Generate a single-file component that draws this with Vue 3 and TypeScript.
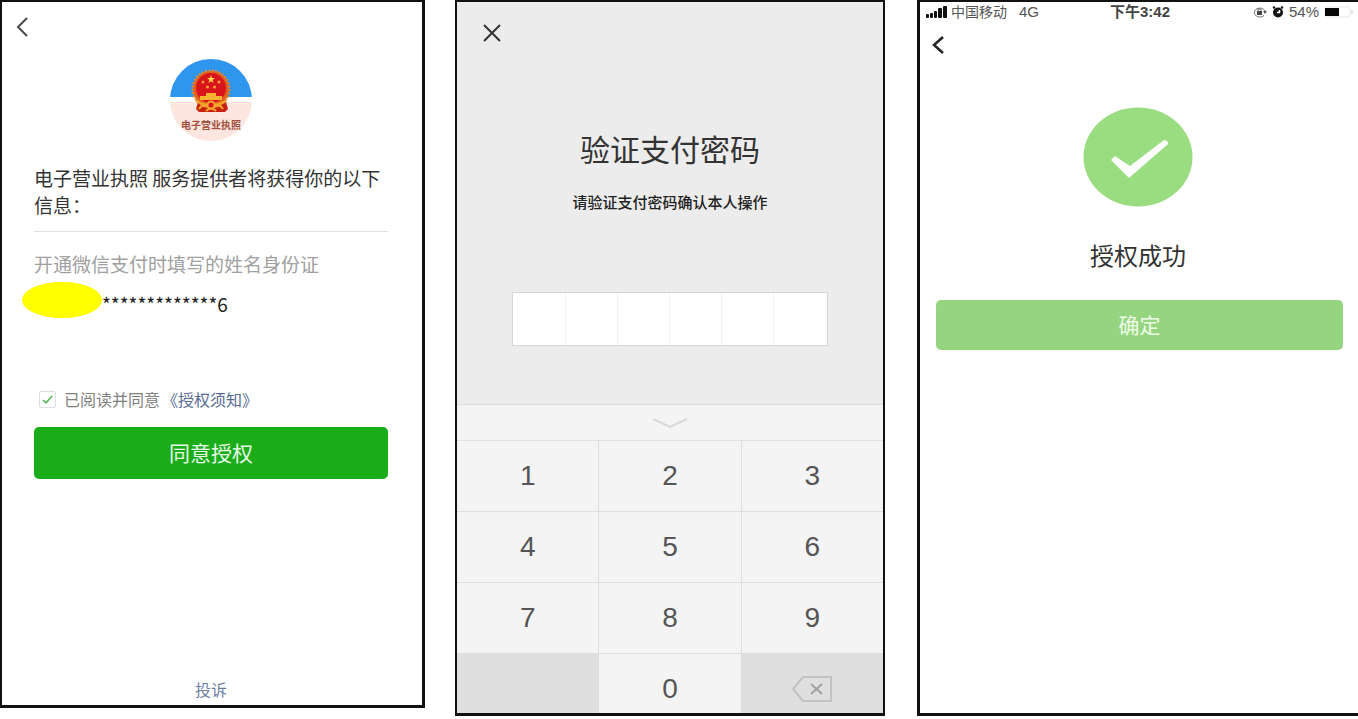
<script setup lang="ts">
import { ref } from 'vue'

const agreed = ref(true)
const pin = ref<string[]>(['', '', '', '', '', ''])
const digits = ['1', '2', '3', '4', '5', '6', '7', '8', '9']

function press(digit: string): void {
  const slot = pin.value.indexOf('')
  if (slot >= 0) pin.value[slot] = digit
}

function erase(): void {
  for (let i = pin.value.length - 1; i >= 0; i--) {
    if (pin.value[i] !== '') {
      pin.value[i] = ''
      return
    }
  }
}
</script>

<template>
  <main class="screens">
    <section class="phone consent">
      <button class="icon-button consent-back" aria-label="返回">
        <svg width="12" height="20" viewBox="0 0 12 20"><path d="M11 1 2 10l9 9" fill="none" stroke="#4a4a4a" stroke-width="2" /></svg>
      </button>
      <div class="logo">
        <svg class="logo-art" width="82" height="82" viewBox="0 0 82 82" aria-hidden="true">
          <defs><clipPath id="disc"><circle cx="41" cy="41" r="41" /></clipPath></defs>
          <g clip-path="url(#disc)">
            <rect width="82" height="82" fill="#fde6df" />
            <rect width="82" height="38" fill="#2f96ef" />
            <rect y="38" width="82" height="5" fill="#fff" />
          </g>
          <path d="M28 43 26 50l3 3h26l3-3-2-7z" fill="#c8200f" />
          <circle cx="41" cy="30" r="18" fill="#e2601c" />
          <circle cx="41" cy="30" r="18.5" fill="none" stroke="#e98a2a" stroke-width="2" stroke-dasharray="2 1.5" />
          <circle cx="41" cy="29" r="15" fill="#d9151b" />
          <path d="m41 16 1 3h3l-2.400 2 1 3-2.600-1.800-2.600 1.800 1-3-2.400-2h3z" fill="#ffd54a" />
          <g fill="#f9a23a"><circle cx="33" cy="23" r="1.500" /><circle cx="49" cy="23" r="1.500" /><circle cx="37.500" cy="28" r="1.500" /><circle cx="44.500" cy="28" r="1.500" /></g>
          <path d="M36 34h10v3h6v4H30v-4h6z" fill="#f6b431" />
          <path d="M26 42q15 8 30 0M29 50q4-6 8-2M53 50q-4-6-8-2M36 52q5-5 10 0" fill="none" stroke="#f3a62c" stroke-width="2" />
          <circle cx="41" cy="46" r="3.500" fill="#d9151b" stroke="#f3a62c" stroke-width="2" />
        </svg>
        <span class="logo-name">电子营业执照</span>
      </div>
      <h1 class="request">电子营业执照 服务提供者将获得你的以下信息：</h1>
      <p class="scope">开通微信支付时填写的姓名身份证</p>
      <p class="identity"><span class="mask"></span><span class="number">*************6</span></p>
      <div class="agreement">
        <input id="agree" v-model="agreed" type="checkbox" />
        <label for="agree">已阅读并同意</label><a href="#terms">《授权须知》</a>
      </div>
      <button class="primary">同意授权</button>
      <a class="complain" href="#complain">投诉</a>
    </section>

    <section class="phone verify">
      <button class="icon-button close" aria-label="关闭">
        <svg width="18" height="18" viewBox="0 0 18 18"><path d="m1 1 16 16M17 1 1 17" fill="none" stroke="#333" stroke-width="2" /></svg>
      </button>
      <h2 class="verify-title">验证支付密码</h2>
      <p class="verify-note">请验证支付密码确认本人操作</p>
      <div class="pin">
        <input v-for="(_, i) in pin" :key="i" v-model="pin[i]" type="password" maxlength="1" :aria-label="`密码第${i + 1}位`" />
      </div>
      <div class="keyboard">
        <button class="collapse" aria-label="收起键盘">
          <svg width="36" height="11" viewBox="0 0 36 11"><path d="m1 1 17 8 17-8" fill="none" stroke="#d9d9d9" stroke-width="2" /></svg>
        </button>
        <div class="keys">
          <button v-for="d in digits" :key="d" class="key" @click="press(d)">{{ d }}</button>
          <span class="key blank"></span>
          <button class="key" @click="press('0')">0</button>
          <button class="key blank" aria-label="删除" @click="erase">
            <svg width="42" height="28" viewBox="0 0 42 28"><path d="M12 2h28v24H12L2 14z" fill="none" stroke="#c2c2c2" stroke-width="2" /><path d="m20 9 11 10M31 9 20 19" fill="none" stroke="#a2a2a2" stroke-width="2" /></svg>
          </button>
        </div>
      </div>
    </section>

    <section class="phone success">
      <header class="status">
        <div class="carrier">
          <svg width="21" height="12" viewBox="0 0 21 12" aria-hidden="true" fill="#111"><rect y="8" width="3" height="4" rx="1" /><rect x="4" y="7" width="3" height="5" rx="1" /><rect x="8" y="5" width="3" height="7" rx="1" /><rect x="12" y="2" width="4" height="10" rx="1" /><rect x="17" width="4" height="12" rx="1" /></svg>
          <span>中国移动</span><span class="network">4G</span>
        </div>
        <span class="clock">下午3:42</span>
        <div class="power">
          <svg width="14" height="12" viewBox="0 0 14 12" aria-hidden="true"><path d="M11 9.500A5.500 4.500 0 1 1 12 5" fill="none" stroke="#777" /><path d="m10 5 4 0-2 3z" fill="#555" /><rect x="4" y="5" width="5" height="4" fill="#444" /><path d="M5 5V3h3v2" fill="none" stroke="#666" /></svg>
          <svg width="12" height="12" viewBox="0 0 12 12" aria-hidden="true"><circle cx="6" cy="6.500" r="5" fill="#111" /><path d="m1 2 2-1M11 2 9 1" stroke="#111" stroke-width="2" /><path d="M6 4.500v2.500h2.500" fill="none" stroke="#fff" stroke-width="1.500" transform="rotate(-90 6.500 6)" /></svg>
          <span>54%</span>
          <svg width="30" height="12" viewBox="0 0 30 12" aria-hidden="true"><rect x="1" y="1" width="25" height="10" rx="2" fill="#fff" stroke="#e8e8e8" /><rect x="1" y="2" width="14" height="8" fill="#080808" /><path d="M28 4v4" stroke="#e2e2e2" stroke-width="2" /></svg>
        </div>
      </header>
      <button class="icon-button success-back" aria-label="返回">
        <svg width="12" height="18" viewBox="0 0 12 18"><path d="M11 1 2 9l9 8" fill="none" stroke="#222" stroke-width="2.500" /></svg>
      </button>
      <svg class="tick" width="110" height="100" viewBox="0 0 110 100" aria-hidden="true"><ellipse cx="55" cy="50" rx="54.500" ry="49.500" fill="#9adc80" /><path d="m28 53 4-4 15 10 34-26q4 0 4 4L46 71z" fill="#fff" /></svg>
      <h2 class="success-title">授权成功</h2>
      <button class="confirm">确定</button>
    </section>
  </main>
</template>

<style>
body {
  margin: 0;
  background: #fff;
}
</style>

<style scoped>
.screens {
  display: grid;
  grid-template-columns: 425fr 430fr 443fr;
  column-gap: 30px;
  box-sizing: border-box;
  min-height: 100vh;
  padding-bottom: 3px;
  font-family: "Noto Sans CJK SC", sans-serif;
}
h1, h2, p {
  margin: 0;
  font-weight: 400;
}
button {
  margin: 0;
  padding: 0;
  border: 0;
  font: inherit;
  cursor: pointer;
}
a {
  color: #576b95;
  text-decoration: none;
}
svg {
  display: block;
  flex: none;
}
.phone {
  display: flex;
  flex-direction: column;
  box-sizing: border-box;
  min-width: 0;
  border: 2px solid #111;
}
.icon-button {
  align-self: flex-start;
  background: none;
}

.consent {
  margin-bottom: 8px;
  padding: 0 34px 4px 32px;
  border-width: 2px 3px 3px 2px;
}
.consent-back {
  margin: 15px 0 0 -18px;
}
.logo {
  position: relative;
  align-self: center;
  margin-top: 22px;
}
.logo-name {
  position: absolute;
  right: 0;
  bottom: 9px;
  left: 0;
  color: #a2523f;
  font-size: 10px;
  font-weight: 700;
  line-height: 14px;
  text-align: center;
}
.request {
  padding: 23px 0 13px;
  border-bottom: 1px solid #e0e0e0;
  color: #333;
  font-size: 19px;
  line-height: 27px;
}
.scope {
  margin-top: 18px;
  color: #a0a0a0;
  font-size: 19px;
  line-height: 28px;
}
.identity {
  display: flex;
  margin: 4px 0 0 -12px;
  color: #222;
  font-size: 19px;
  line-height: 28px;
}
.number {
  padding-top: 8px;
}
.mask {
  width: 80px;
  height: 36px;
  border-radius: 50%;
  background: #ff0;
}
.agreement {
  display: flex;
  align-items: center;
  margin-top: 69px;
  color: #808080;
  font-size: 16px;
  line-height: 24px;
}
.agreement input {
  appearance: none;
  box-sizing: border-box;
  width: 17px;
  height: 17px;
  margin: 0 8px 0 5px;
  border: 1px solid #ddd;
  border-radius: 2px;
}
.agreement input:checked {
  background: url("data:image/svg+xml,%3Csvg xmlns='http://www.w3.org/2000/svg' viewBox='0 0 15 15'%3E%3Cpath d='m3 8 3 3 6-7' fill='none' stroke='%2348b548' stroke-width='1.500'/%3E%3C/svg%3E") center no-repeat;
}
.agreement a {
  margin-left: 2px;
}
.primary {
  height: 52px;
  margin-top: 16px;
  padding-bottom: 2px;
  border-radius: 5px;
  background: #1aad19;
  color: #e8f8e8;
  font-size: 21px;
}
.complain {
  align-self: center;
  margin-top: auto;
  color: #6f7fa3;
  font-size: 16px;
  line-height: 24px;
}

.verify {
  background: #ececec;
  border-width: 2px 2px 3px;
}
.close {
  margin: 22px 0 0 26px;
}
.verify-title {
  margin-top: 84px;
  color: #333;
  font-size: 30px;
  line-height: 44px;
  text-align: center;
}
.verify-note {
  margin-top: 20px;
  color: #222;
  font-size: 15px;
  font-weight: 500;
  line-height: 24px;
  text-align: center;
}
.pin {
  display: grid;
  grid-template-columns: repeat(6, 1fr);
  align-self: center;
  box-sizing: border-box;
  width: 74%;
  height: 54px;
  margin-top: 78px;
  border: 1px solid #d6d6d6;
  background: #fff;
}
.pin input {
  box-sizing: border-box;
  width: 100%;
  min-width: 0;
  border: 0;
  border-right: 1px solid #f2f2f2;
  background: none;
  font-size: 24px;
  text-align: center;
}
.pin input:last-child {
  border-right: 0;
}
.keyboard {
  display: flex;
  flex: 1;
  flex-direction: column;
  margin-top: 58px;
  border-top: 1px solid #dcdcdc;
}
.collapse {
  display: flex;
  align-items: center;
  justify-content: center;
  height: 35px;
  padding-top: 2px;
  background: #f4f4f4;
}
.keys {
  display: grid;
  flex: 1;
  grid-template-columns: repeat(3, 1fr);
  grid-template-rows: 70px 70px 70px 1fr;
  gap: 1px;
  border-top: 1px solid #e0e0e0;
  background: #dedede;
}
.key {
  display: flex;
  align-items: center;
  justify-content: center;
  background: #f4f4f4;
  color: #555;
  font-family: "Liberation Sans", sans-serif;
  font-size: 28px;
}
.key.blank {
  background: #dfdfdf;
}
.key:nth-last-child(-n + 3) {
  padding-top: 10px;
}

.success {
  margin-left: 2px;
  padding-right: 2px;
  border-width: 2px 0 3px 3px;
}
.status {
  display: grid;
  grid-template-columns: 1fr auto 1fr;
  align-items: center;
  padding: 0 2px 0 6px;
  color: #555;
  font-family: "Liberation Sans", "Noto Sans CJK SC", sans-serif;
  font-size: 15px;
  line-height: 20px;
}
.carrier, .power {
  display: flex;
  align-items: center;
}
.carrier {
  gap: 4px;
  font-size: 14px;
}
.network {
  margin-left: 8px;
  font-size: 15px;
}
.clock {
  color: #444;
  font-weight: 700;
}
.power {
  justify-content: flex-end;
  gap: 5px;
}
.success-back {
  margin: 14px 0 0 12px;
}
.tick {
  align-self: center;
  margin-top: 53px;
}
.success-title {
  margin-top: 30px;
  color: #333;
  font-size: 24px;
  line-height: 36px;
  text-align: center;
}
.confirm {
  height: 50px;
  margin: 27px 13px 0 16px;
  padding-bottom: 2px;
  border-radius: 5px;
  background: #96d57f;
  color: #eefbe9;
  font-size: 21px;
}
</style>
